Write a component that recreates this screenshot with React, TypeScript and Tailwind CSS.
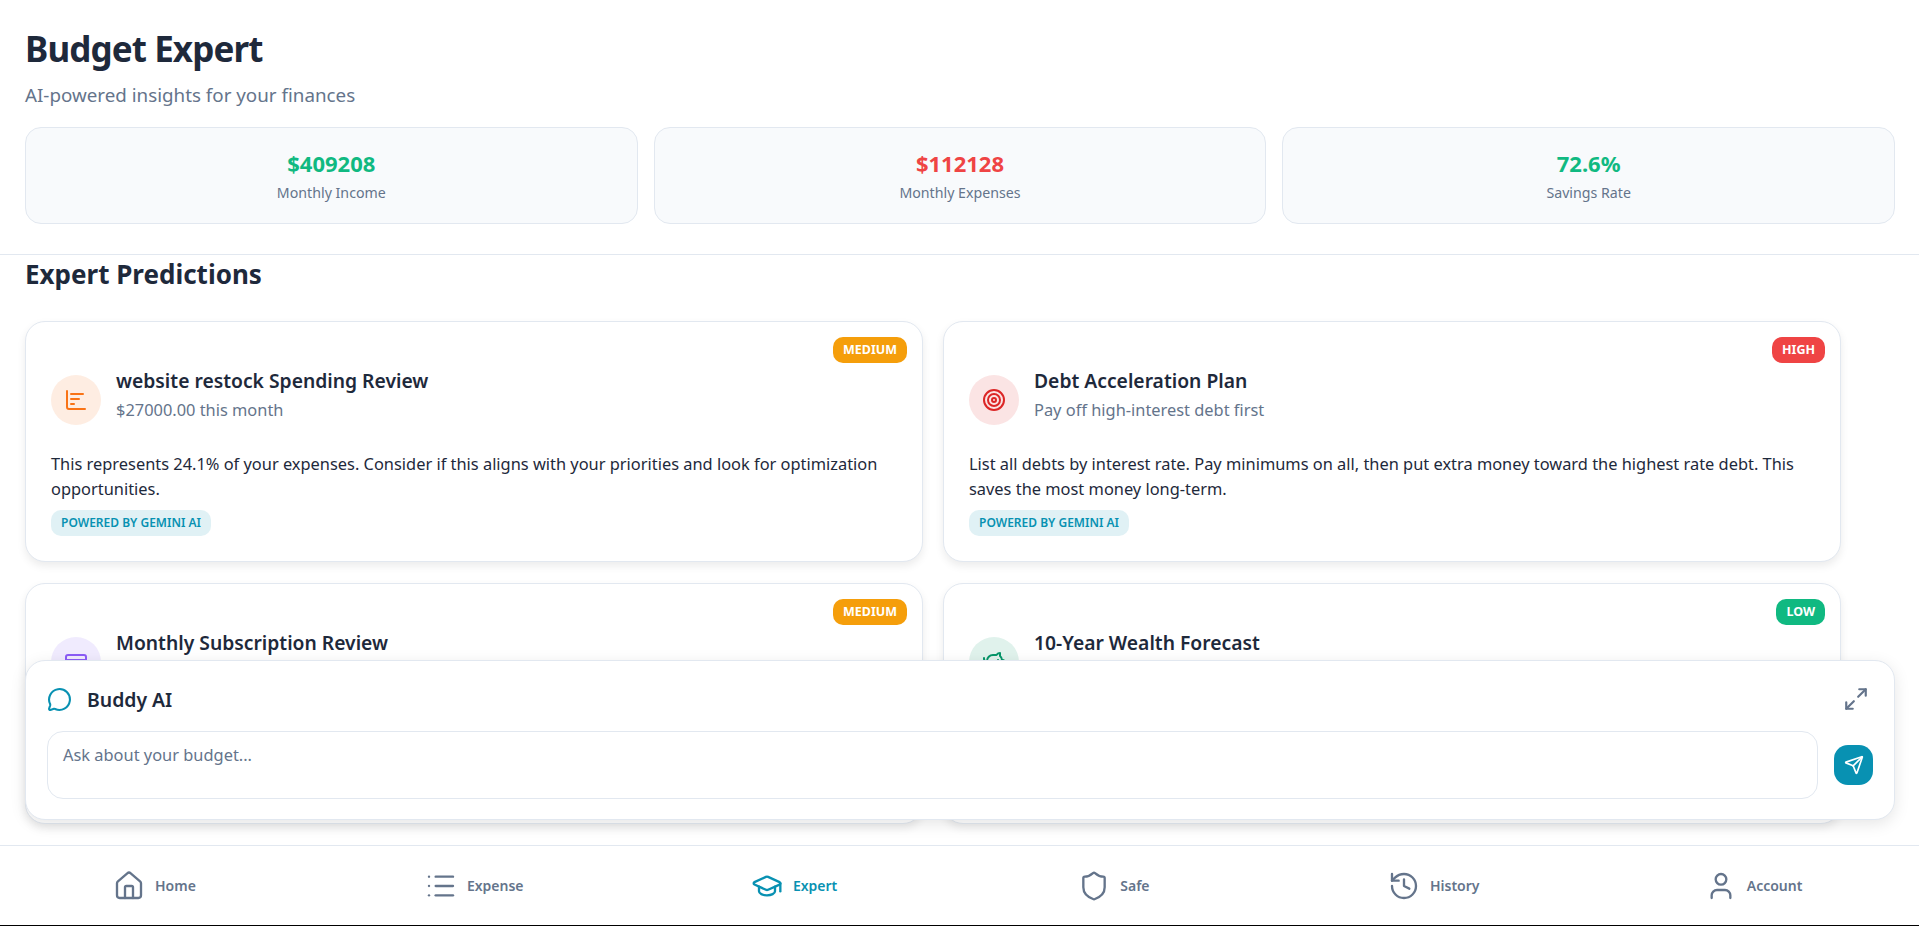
import {
  ChartBarDecreasing,
  CreditCard,
  GraduationCap,
  History,
  House,
  List,
  Maximize2,
  MessageCircle,
  PiggyBank,
  Send,
  Shield,
  Target,
  User,
} from "lucide-react";

const stats = [
  { value: "$409208", label: "Monthly Income", color: "text-[#10b981]" },
  { value: "$112128", label: "Monthly Expenses", color: "text-[#ef4444]" },
  { value: "72.6%", label: "Savings Rate", color: "text-[#10b981]" },
];

const predictions = [
  {
    title: "website restock Spending Review",
    sub: "$27000.00 this month",
    body: "This represents 24.1% of your expenses. Consider if this aligns with your priorities and look for optimization opportunities.",
    badge: "MEDIUM",
    badgeBg: "bg-[#f59e0b]",
    iconBg: "bg-[#f9731620]",
    icon: <ChartBarDecreasing className="w-6 h-6 text-[#f97316]" />,
  },
  {
    title: "Debt Acceleration Plan",
    sub: "Pay off high-interest debt first",
    body: "List all debts by interest rate. Pay minimums on all, then put extra money toward the highest rate debt. This saves the most money long-term.",
    badge: "HIGH",
    badgeBg: "bg-[#ef4444]",
    iconBg: "bg-[#dc262620]",
    icon: <Target className="w-6 h-6 text-[#dc2626]" />,
  },
  {
    title: "Monthly Subscription Review",
    sub: "Audit recurring charges",
    body: "Go through your recurring subscriptions and cancel anything you have not used in the last month. Small charges add up over a year.",
    badge: "MEDIUM",
    badgeBg: "bg-[#f59e0b]",
    iconBg: "bg-[#8b5cf620]",
    icon: <CreditCard className="w-6 h-6 text-[#8b5cf6]" />,
  },
  {
    title: "10-Year Wealth Forecast",
    sub: "Projected savings growth",
    body: "At your current savings rate your wealth could grow substantially over ten years. Invest consistently to benefit from compound growth.",
    badge: "LOW",
    badgeBg: "bg-[#10b981]",
    iconBg: "bg-[#05966920]",
    icon: <PiggyBank className="w-6 h-6 text-[#059669]" />,
  },
];

const navItems = [
  { label: "Home", icon: <House className="w-8 h-8" strokeWidth={1.75} /> },
  { label: "Expense", icon: <List className="w-8 h-8" strokeWidth={1.75} /> },
  { label: "Expert", icon: <GraduationCap className="w-8 h-8" strokeWidth={1.75} />, active: true },
  { label: "Safe", icon: <Shield className="w-8 h-8" strokeWidth={1.75} /> },
  { label: "History", icon: <History className="w-8 h-8" strokeWidth={1.75} /> },
  { label: "Account", icon: <User className="w-8 h-8" strokeWidth={1.75} /> },
];

export default function App() {
  return (
    <div className="h-screen flex flex-col overflow-hidden bg-white border-b border-black font-['Noto_Sans','Open_Sans',sans-serif] text-[#1e293b]">
      <header className="pl-[25px] pr-6 pt-[25px] pb-[30px] border-b border-[#e2e8f0]">
        <h1 className="text-[35px] leading-[48px] font-bold tracking-[-0.9px]">Budget Expert</h1>
        <p className="mt-[8px] text-[18.8px] leading-7 text-[#64748b]">AI-powered insights for your finances</p>
        <div className="mt-[18px] grid grid-cols-3 gap-4">
          {stats.map((s) => (
            <div key={s.label} className="h-[97px] pt-[1px] flex flex-col items-center justify-center bg-[#f8fafc] border border-[#e2e8f0] rounded-2xl">
              <div className={`text-[22px] leading-7 font-bold ${s.color}`}>{s.value}</div>
              <div className="mt-[6px] text-[14.2px] leading-5 text-[#64748b]">{s.label}</div>
            </div>
          ))}
        </div>
      </header>

      <main className="relative flex-1 min-h-0 overflow-hidden px-[25px]">
        <h2 className="text-[26px] leading-[39px] font-bold mb-[27px]">Expert Predictions</h2>
        <div className="grid grid-cols-2 gap-x-5 gap-y-[21px] w-[1816px]">
          {predictions.map((p) => (
            <div key={p.title} className="relative bg-white border border-[#e2e8f0] rounded-[20px] shadow-[0_4px_8px_rgba(0,0,0,0.08)] px-[25px] pt-[45px] pb-[25px]">
              <span className={`absolute top-[15px] right-[15px] h-[26px] px-[10px] flex items-center rounded-[10px] text-[12.5px] font-bold text-white ${p.badgeBg}`}>
                {p.badge}
              </span>
              <div className="flex items-start gap-[15px]">
                <div className={`mt-[8px] w-[50px] h-[50px] rounded-full flex items-center justify-center shrink-0 ${p.iconBg}`}>
                  {p.icon}
                </div>
                <div>
                  <div className="text-[19.3px] leading-[27px] font-semibold">{p.title}</div>
                  <div className="mt-[2px] text-[16.4px] leading-7 text-[#64748b]">{p.sub}</div>
                </div>
              </div>
              <p className="mt-[26px] text-[16.4px] leading-[25px]">{p.body}</p>
              <span className="mt-[9px] inline-flex items-center h-[26px] px-[10px] rounded-[10px] bg-[#0891b220] text-xs font-semibold text-[#0891b2]">
                POWERED BY GEMINI AI
              </span>
            </div>
          ))}
        </div>

        <section className="absolute left-[25px] right-6 bottom-[25px] h-[160px] bg-white border border-[#e2e8f0] rounded-[20px] shadow-[0_4px_16px_rgba(0,0,0,0.1)] px-[21px]">
          <div className="flex items-center justify-between h-[70px] pt-[8px]">
            <div className="flex items-center gap-[15px]">
              <MessageCircle className="w-[25px] h-[25px] text-[#0891b2]" />
              <span className="text-[19.4px] font-semibold">Buddy AI</span>
            </div>
            <Maximize2 className="w-[26px] h-[26px] mr-[4px] mb-[3px] text-[#64748b]" />
          </div>
          <div className="flex items-center gap-4">
            <textarea
              readOnly
              placeholder="Ask about your budget..."
              className="flex-1 h-[68px] resize-none border border-[#e2e8f0] rounded-2xl px-[15px] pt-[11px] pb-[10px] text-[16.4px] leading-6 outline-none placeholder:text-[#64748b]"
            />
            <button className="w-[39px] h-10 rounded-[14px] bg-[#0891b2] flex items-center justify-center text-white">
              <Send className="w-5 h-5" />
            </button>
          </div>
        </section>
      </main>

      <nav className="h-20 border-t border-[#e2e8f0] grid grid-cols-6">
        {navItems.map((n) => (
          <div key={n.label} className={`flex items-center justify-center gap-[10px] pr-[11px] ${n.active ? "text-[#0891b2]" : "text-[#64748b]"}`}>
            {n.icon}
            <span className="text-sm font-semibold">{n.label}</span>
          </div>
        ))}
      </nav>
    </div>
  );
}
